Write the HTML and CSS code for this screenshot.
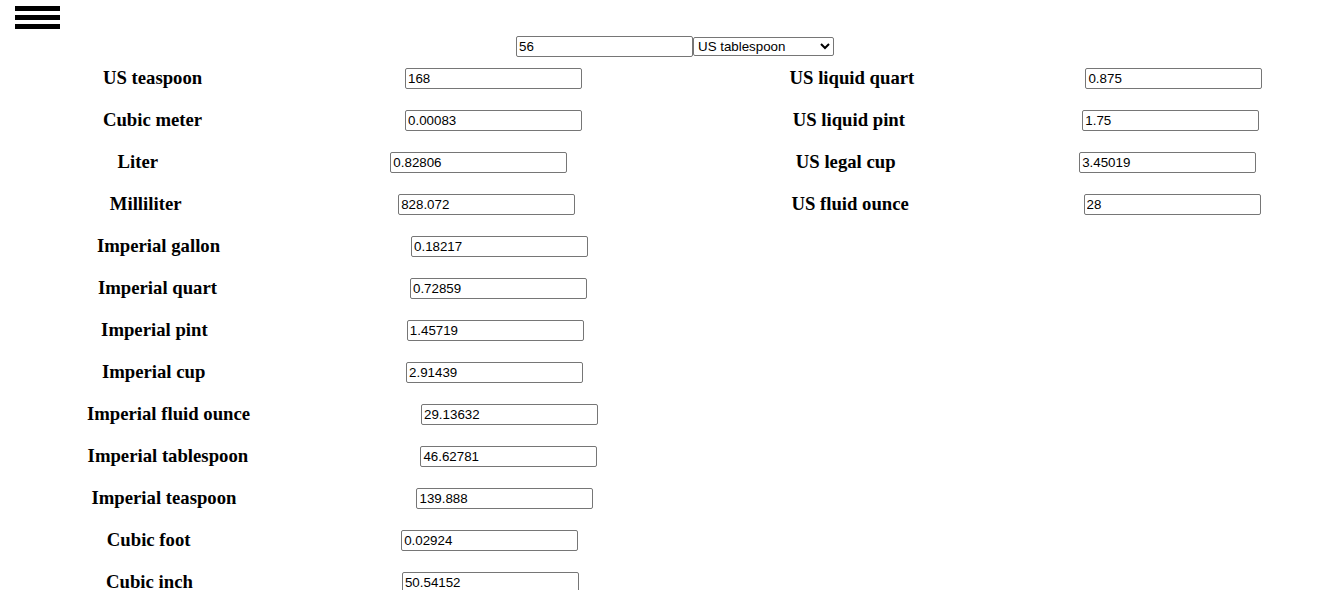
FILE: index.html
```html
<!DOCTYPE html>
<html lang="en">
<head>
<meta charset="utf-8">
<title>Volume converter</title>
<link rel="stylesheet" href="styles.css">
</head>
<body>
<div class="page">
  <div class="menu" aria-label="menu">
    <span class="bar"></span>
    <span class="bar"></span>
    <span class="bar"></span>
  </div>
  <div class="top"><input class="field" type="text" value="56"><select class="unit"><option>US tablespoon</option></select></div>
  <div class="cols">
    <div class="col col-left">
      <div class="row"><h3 class="label">US teaspoon</h3><input class="field" type="text" value="168"></div>
      <div class="row"><h3 class="label">Cubic meter</h3><input class="field" type="text" value="0.00083"></div>
      <div class="row"><h3 class="label">Liter</h3><input class="field" type="text" value="0.82806"></div>
      <div class="row"><h3 class="label">Milliliter</h3><input class="field" type="text" value="828.072"></div>
      <div class="row"><h3 class="label">Imperial gallon</h3><input class="field" type="text" value="0.18217"></div>
      <div class="row"><h3 class="label">Imperial quart</h3><input class="field" type="text" value="0.72859"></div>
      <div class="row"><h3 class="label">Imperial pint</h3><input class="field" type="text" value="1.45719"></div>
      <div class="row"><h3 class="label">Imperial cup</h3><input class="field" type="text" value="2.91439"></div>
      <div class="row"><h3 class="label">Imperial fluid ounce</h3><input class="field" type="text" value="29.13632"></div>
      <div class="row"><h3 class="label">Imperial tablespoon</h3><input class="field" type="text" value="46.62781"></div>
      <div class="row"><h3 class="label">Imperial teaspoon</h3><input class="field" type="text" value="139.888"></div>
      <div class="row"><h3 class="label">Cubic foot</h3><input class="field" type="text" value="0.02924"></div>
      <div class="row"><h3 class="label">Cubic inch</h3><input class="field" type="text" value="50.54152"></div>
    </div>
    <div class="col col-right">
      <div class="row"><h3 class="label">US liquid quart</h3><input class="field" type="text" value="0.875"></div>
      <div class="row"><h3 class="label">US liquid pint</h3><input class="field" type="text" value="1.75"></div>
      <div class="row"><h3 class="label">US legal cup</h3><input class="field" type="text" value="3.45019"></div>
      <div class="row"><h3 class="label">US fluid ounce</h3><input class="field" type="text" value="28"></div>
    </div>
  </div>
</div>
</body>
</html>
```

FILE: styles.css
```css
html, body {
  margin: 0;
  padding: 0;
  background: #fff;
  overflow: hidden;
}

body {
  font-family: "Liberation Serif", "Times New Roman", serif;
  color: #000;
}

.page {
  width: 1333px;
  overflow: hidden;
}

.menu {
  display: flex;
  flex-direction: column;
  gap: 4px;
  width: 45px;
  margin: 6px 0 0 15px;
}

.bar {
  display: block;
  height: 5px;
  background: #000;
}

.top {
  display: flex;
  align-items: center;
  justify-content: center;
  padding-left: 17px;
  margin-top: 7px;
  height: 21px;
}

.field {
  box-sizing: border-box;
  width: 177px;
  height: 21px;
  margin: 0;
  padding: 1px 2px;
  border: 1px solid #767676;
  border-radius: 2px;
  font-family: "Liberation Sans", Arial, sans-serif;
  font-size: 13.33px;
  color: #000;
  background: #fff;
}

.unit {
  box-sizing: border-box;
  width: 141px;
  height: 19px;
  margin: 0;
  padding: 0;
  border: 1px solid #767676;
  border-radius: 2px;
  font-family: "Liberation Sans", Arial, sans-serif;
  font-size: 13.33px;
  color: #000;
  background: #fff;
}

.cols {
  display: grid;
  grid-template-columns: 682px 644px;
  column-gap: 20.5px;
  padding-left: 1.5px;
  width: 1360px;
}

.row {
  display: flex;
  justify-content: space-around;
  align-items: center;
  height: 42px;
}

.label {
  margin: 0;
  font-size: 18.72px;
  font-weight: bold;
  line-height: normal;
  white-space: nowrap;
}
```
